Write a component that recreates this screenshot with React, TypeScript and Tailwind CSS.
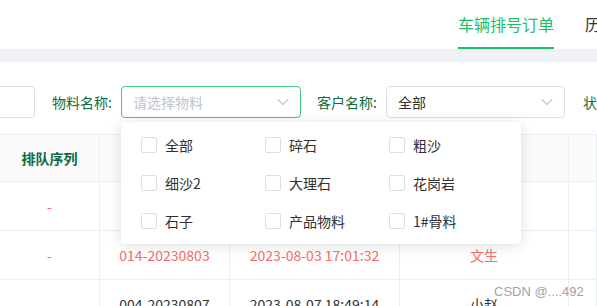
import React from "react";

const font = { fontFamily: '"Noto Sans CJK SC", "Liberation Sans", sans-serif' };

function Chevron() {
  return (
    <svg width="12" height="8" viewBox="0 0 12 8" className="shrink-0">
      <polyline points="1,1.5 6,6.5 11,1.5" fill="none" stroke="#c0c4cc" strokeWidth="1.2" />
    </svg>
  );
}

function Check({ label }: { label: string }) {
  return (
    <div className="flex items-center h-[16px]">
      <div className="w-[16px] h-[16px] border border-[#dcdfe6] rounded-[2px] bg-white shrink-0" />
      <span className="ml-[8px] text-[14px] text-[#303133] leading-none">{label}</span>
    </div>
  );
}

const cell = "flex items-center justify-center border-r border-[#ebeef5] text-[14px]";

export default function App() {
  const items = ["全部", "碎石", "粗沙", "细沙2", "大理石", "花岗岩", "石子", "产品物料", "1#骨料"];
  return (
    <div className="relative w-[597px] h-[306px] overflow-hidden bg-white" style={font}>
      {/* tabs */}
      <div className="flex items-stretch h-[49px]">
        <div className="ml-[458px] w-[96px] flex flex-col">
          <div className="flex-1 flex items-center text-[16px] text-[#1bc06a] whitespace-nowrap leading-none">车辆排号订单</div>
          <div className="h-[2px] bg-[#17c35f]" />
        </div>
        <div className="ml-[31px] flex items-center text-[16px] text-[#303133] whitespace-nowrap leading-none pb-[2px]">历</div>
      </div>
      <div className="h-[13px] bg-[#f0f2f5]" />

      {/* filters */}
      <div className="flex items-center pt-[24px] h-[56px] text-[14px]">
        <div className="w-[35px] h-[32px] border border-l-0 border-[#dcdfe6] rounded-r-[4px] shrink-0" />
        <div className="ml-[17px] w-[69px] shrink-0 text-[#0f6b3e] whitespace-nowrap">物料名称:</div>
        <div className="w-[180px] h-[32px] shrink-0 border border-[#3fcb7f] rounded-[4px] flex items-center justify-between pl-[11px] pr-[11px]">
          <span className="text-[#c0c4cc]">请选择物料</span>
          <Chevron />
        </div>
        <div className="ml-[16px] w-[69px] shrink-0 text-[#0f6b3e] whitespace-nowrap">客户名称:</div>
        <div className="w-[179px] h-[32px] shrink-0 border border-[#dcdfe6] rounded-[4px] flex items-center justify-between pl-[11px] pr-[11px]">
          <span className="text-[#303133]">全部</span>
          <Chevron />
        </div>
        <div className="ml-[18px] text-[#0f6b3e] whitespace-nowrap">状</div>
      </div>

      {/* table */}
      <div className="mt-[16px] border-t border-[#ebeef5]">
        <div className="grid grid-cols-[100px_130px_170px_169px_1fr] h-[47px] bg-[#fafafa] border-b border-[#ebeef5]">
          <div className={cell + " font-bold text-[#0f6b3e]"}>排队序列</div>
          <div className={cell} />
          <div className={cell} />
          <div className={cell} />
          <div className={cell} />
        </div>
        <div className="grid grid-cols-[100px_130px_170px_169px_1fr] h-[49px] border-b border-[#ebeef5] text-[#f56c6c]">
          <div className={cell}>-</div>
          <div className={cell} />
          <div className={cell} />
          <div className={cell} />
          <div className={cell} />
        </div>
        <div className="grid grid-cols-[100px_130px_170px_169px_1fr] h-[49px] border-b border-[#ebeef5] text-[#f56c6c]">
          <div className={cell}>-</div>
          <div className={cell}>014-20230803</div>
          <div className={cell}>2023-08-03 17:01:32</div>
          <div className={cell}>文生</div>
          <div className={cell} />
        </div>
        <div className="grid grid-cols-[100px_130px_170px_169px_1fr] h-[49px] border-b border-[#ebeef5] text-[#303133]">
          <div className={cell}>-</div>
          <div className={cell}>004-20230807</div>
          <div className={cell}>2023-08-07 18:49:14</div>
          <div className={cell}>小赵</div>
          <div className={cell} />
        </div>
      </div>

      {/* dropdown */}
      <div className="absolute left-[121px] top-[122px] w-[400px] h-[122px] bg-white rounded-[4px] shadow-[0_2px_14px_rgba(0,0,0,0.13)] pl-[20px] pt-[15px]">
        <div className="grid grid-cols-[124px_124px_124px] auto-rows-[38px]">
          {items.map((t) => (
            <Check key={t} label={t} />
          ))}
        </div>
      </div>

      {/* watermark */}
      <div
        className="absolute left-[494px] top-[282px] text-[13px] text-[#a3a3a3] whitespace-nowrap"
        style={{ fontFamily: '"Liberation Sans", sans-serif' }}
      >
        CSDN @....492
      </div>
    </div>
  );
}
